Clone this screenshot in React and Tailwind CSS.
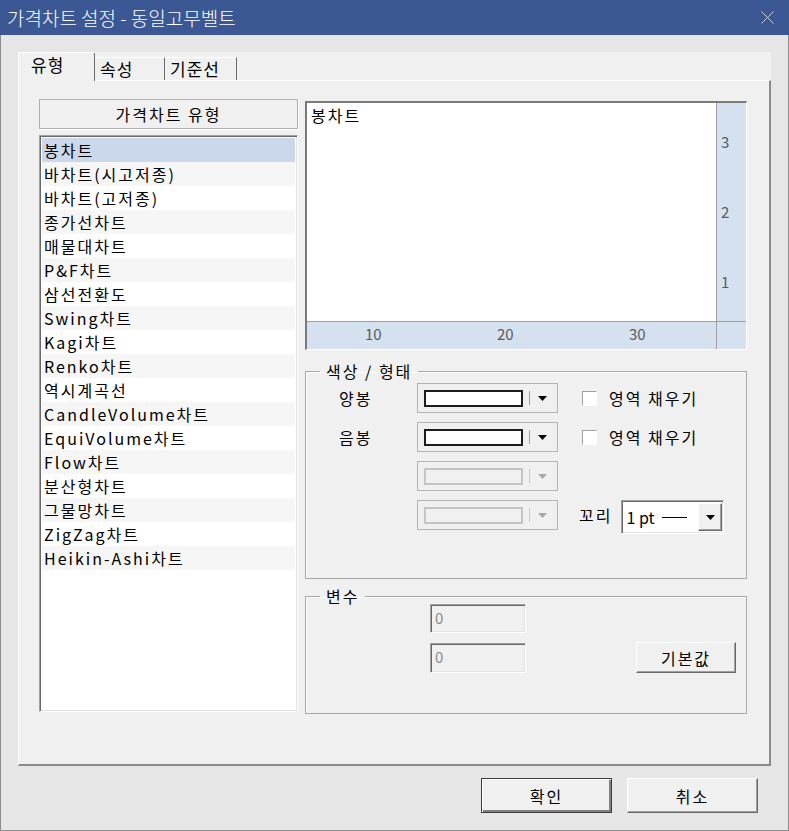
import React from 'react';

const KR = "font-['Noto_Sans_CJK_KR',sans-serif]";

const chartTypes = [
  '봉차트',
  '바차트(시고저종)',
  '바차트(고저종)',
  '종가선차트',
  '매물대차트',
  'P&F차트',
  '삼선전환도',
  'Swing차트',
  'Kagi차트',
  'Renko차트',
  '역시계곡선',
  'CandleVolume차트',
  'EquiVolume차트',
  'Flow차트',
  '분산형차트',
  '그물망차트',
  'ZigZag차트',
  'Heikin-Ashi차트',
];

const sunken =
  'border border-t-[#a0a0a0] border-l-[#a0a0a0] border-r-white border-b-white shadow-[inset_1px_1px_0_#696969,inset_-1px_-1px_0_#e3e3e3]';
const raised =
  'border border-t-white border-l-white border-r-[#696969] border-b-[#696969] shadow-[inset_-1px_-1px_0_#a0a0a0]';

const Arrow = ({ disabled }) => (
  <svg width="9" height="5" viewBox="0 0 9 5">
    <path d="M0 0H9L4.5 5Z" fill={disabled ? '#a8a8a8' : '#000'} />
  </svg>
);

// 색상 콤보 (owner-draw)
const ColorCombo = ({ disabled }) => (
  <div className="flex h-[30px] w-[141px] items-center border border-[#b4b4b4] bg-[#f0f0f0] pl-[6px]">
    <div
      className={
        disabled
          ? 'h-[17px] w-[99px] border-2 border-[#c4c4c4] bg-[#f0f0f0]'
          : 'h-[17px] w-[99px] border-2 border-[#1c1c1c] bg-white'
      }
    />
    <div className={disabled ? 'ml-[6px] h-[14px] w-px bg-[#c8c8c8]' : 'ml-[6px] h-[14px] w-px bg-[#a0a0a0]'} />
    <div className="ml-[8px] flex items-center">
      <Arrow disabled={disabled} />
    </div>
  </div>
);

const Check = () => (
  <div className="flex items-center">
    <div className="h-[15px] w-[15px] border border-t-[#a0a0a0] border-l-[#a0a0a0] border-r-white border-b-white bg-white" />
    <span className="ml-[12px] tracking-[2px]">영역 채우기</span>
  </div>
);

const App = () => {
  return (
    <div className={`flex h-[831px] w-[789px] flex-col bg-[#e6e6e6] text-[16px] text-black ${KR}`}>
      {/* 타이틀바 */}
      <div className="flex h-[35px] shrink-0 items-center justify-between bg-[#3b5894] pl-[7px] pr-[15px]">
        <span className="text-[19px] font-light leading-[35px] text-white">가격차트 설정 - 동일고무벨트</span>
        <svg width="13" height="13" viewBox="0 0 13 13">
          <path d="M0.5 0.5L12.5 12.5M12.5 0.5L0.5 12.5" stroke="#c9d1e2" strokeWidth="1" />
        </svg>
      </div>

      <div className="flex flex-1 flex-col border-x border-b border-[#8c8c8c] pl-[17px] pt-[17px]">
        {/* 탭 컨트롤 */}
        <div className="w-[753px]">
          <div className="flex h-[28px] items-end bg-[#f0f0f0] text-[17px] tracking-[1px]">
            <div className="relative z-10 -mb-px h-[29px] w-[77px] rounded-t-[3px] border-l border-t border-r border-l-white border-t-white border-r-[#696969] bg-[#f0f0f0] pl-[12px] leading-[24px]">
              유형
            </div>
            <div className="h-[23px] w-[70px] border-t border-r border-t-white border-r-[#696969] pl-[5px] leading-[22px]">
              속성
            </div>
            <div className="h-[23px] w-[72px] border-t border-r border-t-white border-r-[#696969] pl-[5px] leading-[22px]">
              기준선
            </div>
          </div>

          <div className="flex h-[686px] border-l border-t border-r-2 border-b-2 border-l-white border-t-white border-r-[#8a8a8a] border-b-[#8a8a8a] bg-[#f0f0f0] pl-[20px] pt-[18px]">
            {/* 왼쪽: 차트 유형 목록 */}
            <div className="flex w-[259px] flex-col">
              <div className="flex h-[30px] items-center justify-center border border-[#b0b0b0] shadow-[1px_1px_0_white] tracking-[2px]">
                가격차트 유형
              </div>
              <div className={`mt-[6px] h-[577px] bg-white p-[2px] ${sunken}`}>
                {chartTypes.map((t, i) => (
                  <div
                    key={t}
                    className={
                      i === 0
                        ? 'h-[24px] bg-[#cbd8ec] pl-[2px] leading-[24px] tracking-[2px]'
                        : i % 2 === 1
                        ? 'h-[24px] bg-[#f6f6f6] pl-[2px] leading-[24px] tracking-[2px]'
                        : 'h-[24px] bg-white pl-[2px] leading-[24px] tracking-[2px]'
                    }
                  >
                    {t}
                  </div>
                ))}
              </div>
            </div>

            {/* 오른쪽 */}
            <div className="ml-[7px] mt-[2px] flex w-[442px] flex-col">
              {/* 미리보기 */}
              <div className="h-[249px] border-t-2 border-l-2 border-r border-b border-t-[#7a7a7a] border-l-[#7a7a7a] border-r-white border-b-white">
                <div className="grid h-full grid-cols-[1fr_30px] grid-rows-[1fr_28px]">
                  <div className="bg-white pl-[4px] leading-[24px] tracking-[2px]">봉차트</div>
                  <div className="relative border-l border-[#a0a0a0] bg-[#d6e1ef] text-[15px] leading-[18px] text-[#5a5a5a]">
                    <span className="absolute left-[4px] top-[30px]">3</span>
                    <span className="absolute left-[4px] top-[100px]">2</span>
                    <span className="absolute left-[4px] top-[170px]">1</span>
                  </div>
                  <div className="relative border-t border-[#a0a0a0] bg-[#d6e1ef] text-[15px] leading-[18px] text-[#5a5a5a]">
                    <span className="absolute left-[58px] top-[3px]">10</span>
                    <span className="absolute left-[190px] top-[3px]">20</span>
                    <span className="absolute left-[322px] top-[3px]">30</span>
                  </div>
                  <div className="border-l border-t border-[#a0a0a0] bg-[#d6e1ef]" />
                </div>
              </div>

              {/* 색상 / 형태 */}
              <fieldset className="mt-[11px] h-[218px] border border-[#a8a8a8] shadow-[inset_1px_1px_0_white]">
                <legend className="ml-[14px] px-[6px] leading-[20px] tracking-[2px]">색상 / 형태</legend>
                <div className="flex flex-col gap-[9px] pl-[33px] pt-[2px]">
                  <div className="flex h-[30px] items-center">
                    <span className="w-[78px] tracking-[2px]">양봉</span>
                    <ColorCombo />
                    <div className="ml-[24px]">
                      <Check />
                    </div>
                  </div>
                  <div className="flex h-[30px] items-center">
                    <span className="w-[78px] tracking-[2px]">음봉</span>
                    <ColorCombo />
                    <div className="ml-[24px]">
                      <Check />
                    </div>
                  </div>
                  <div className="flex h-[30px] items-center pl-[78px]">
                    <ColorCombo disabled />
                  </div>
                  <div className="flex h-[30px] items-center pl-[78px]">
                    <ColorCombo disabled />
                    <span className="ml-[21px] tracking-[2px]">꼬리</span>
                    <div className={`ml-[9px] mt-[4px] flex h-[34px] w-[103px] items-center bg-white pl-[4px] ${sunken}`}>
                      <span className="text-[16px]">1 pt</span>
                      <div className="ml-[7px] h-px w-[25px] bg-black" />
                      <div className={`ml-auto mr-[1px] flex h-[28px] w-[24px] items-center justify-center bg-[#f0f0f0] ${raised}`}>
                        <Arrow />
                      </div>
                    </div>
                  </div>
                </div>
              </fieldset>

              {/* 변수 */}
              <fieldset className="mt-[7px] h-[128px] border border-[#a8a8a8] shadow-[inset_1px_1px_0_white]">
                <legend className="ml-[14px] px-[6px] leading-[20px] tracking-[2px]">변수</legend>
                <div className="-mt-[2px] flex items-end pl-[124px]">
                  <div className="flex flex-col gap-[10px]">
                    <div className={`h-[29px] w-[96px] bg-[#f0f0f0] pl-[4px] text-[15px] leading-[25px] text-[#8a8a8a] ${sunken}`}>0</div>
                    <div className={`h-[30px] w-[96px] bg-[#f0f0f0] pl-[4px] text-[15px] leading-[26px] text-[#8a8a8a] ${sunken}`}>0</div>
                  </div>
                  <div className={`ml-[110px] flex h-[31px] w-[100px] items-center justify-center bg-[#f0f0f0] tracking-[2px] ${raised}`}>
                    기본값
                  </div>
                </div>
              </fieldset>
            </div>
          </div>
        </div>

        {/* 하단 버튼 */}
        <div className="mt-[12px] flex justify-end gap-[15px] pr-[30px]">
          <div className="flex h-[35px] w-[131px] items-center justify-center border border-[#3c3c3c] bg-[#f0f0f0] tracking-[2px] shadow-[inset_1px_1px_0_white,inset_-2px_-2px_0_#808080]">
            확인
          </div>
          <div className={`flex h-[35px] w-[131px] items-center justify-center bg-[#f0f0f0] tracking-[2px] ${raised}`}>
            취소
          </div>
        </div>
      </div>
    </div>
  );
};

export default App;
